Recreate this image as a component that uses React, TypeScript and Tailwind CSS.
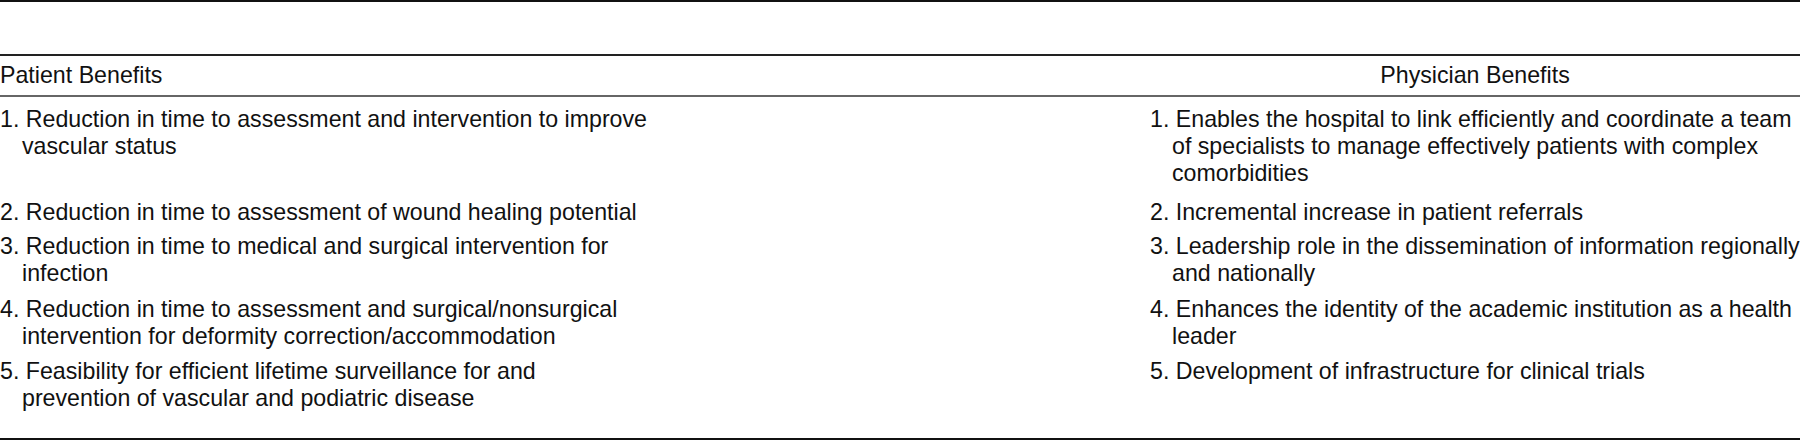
const rows: { patient: string[]; physician: string[]; gap: string }[] = [
  {
    patient: ["1. Reduction in time to assessment and intervention to improve", "vascular status"],
    physician: [
      "1. Enables the hospital to link efficiently and coordinate a team",
      "of specialists to manage effectively patients with complex",
      "comorbidities",
    ],
    gap: "pb-[12px]",
  },
  {
    patient: ["2. Reduction in time to assessment of wound healing potential"],
    physician: ["2. Incremental increase in patient referrals"],
    gap: "pb-[7px]",
  },
  {
    patient: ["3. Reduction in time to medical and surgical intervention for", "infection"],
    physician: ["3. Leadership role in the dissemination of information regionally", "and nationally"],
    gap: "pb-[9px]",
  },
  {
    patient: ["4. Reduction in time to assessment and surgical/nonsurgical", "intervention for deformity correction/accommodation"],
    physician: ["4. Enhances the identity of the academic institution as a health", "leader"],
    gap: "pb-[8px]",
  },
  {
    patient: ["5. Feasibility for efficient lifetime surveillance for and", "prevention of vascular and podiatric disease"],
    physician: ["5. Development of infrastructure for clinical trials"],
    gap: "",
  },
];

function Item({ lines }: { lines: string[] }) {
  return (
    <div className="whitespace-nowrap">
      {lines.map((l, i) => (
        <div key={i} className={i > 0 ? "pl-[22px]" : ""}>
          {l}
        </div>
      ))}
    </div>
  );
}

export default function App() {
  return (
    <div className="w-[1800px] h-[440px] bg-white flex flex-col text-[23.2px] leading-[27px] text-[#111] font-['Liberation_Sans',Arial,sans-serif]">
      <div className="h-[54px] border-t-2 border-[#111]" />
      <div className="grid grid-cols-[650px_1fr_650px] border-t-2 border-[#222] border-b-2 border-b-[#666] pt-[6px] pb-[6px]">
        <div>Patient Benefits</div>
        <div />
        <div className="text-center">Physician Benefits</div>
      </div>
      <div className="flex-1 flex flex-col border-b-2 border-[#111] pt-[9px]">
        {rows.map((r, i) => (
          <div key={i} className={`grid grid-cols-[650px_1fr_650px] ${r.gap}`}>
            <Item lines={r.patient} />
            <div />
            <Item lines={r.physician} />
          </div>
        ))}
      </div>
    </div>
  );
}
